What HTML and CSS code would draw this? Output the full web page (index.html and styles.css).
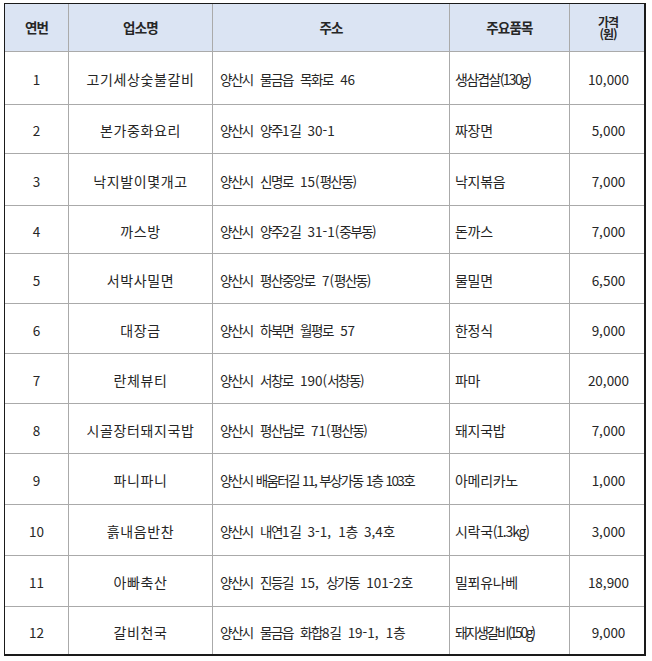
FILE: index.html
```html
<!DOCTYPE html>
<html lang="ko">
<head>
<meta charset="utf-8">
<title>착한가격업소</title>
<link rel="stylesheet" href="styles.css">
</head>
<body>
<div class="sheet">
  <div class="cell head">연번</div>
  <div class="cell head">업소명</div>
  <div class="cell head">주소</div>
  <div class="cell head">주요품목</div>
  <div class="cell head last two"><span>가격</span><span>(원)</span></div>

  <div class="cell num">1</div>
  <div class="cell name">고기세상숯불갈비</div>
  <div class="cell addr"><span>양산시 물금읍 목화로 <span class="d">46</span></span></div>
  <div class="cell item tight">생삼겹살(130g)</div>
  <div class="cell price last">10,000</div>

  <div class="cell num">2</div>
  <div class="cell name">본가중화요리</div>
  <div class="cell addr"><span>양산시 양주<span class="d">1</span>길 <span class="d">30-1</span></span></div>
  <div class="cell item">짜장면</div>
  <div class="cell price last">5,000</div>

  <div class="cell num">3</div>
  <div class="cell name">낙지발이몇개고</div>
  <div class="cell addr"><span>양산시 신명로 <span class="d">15(</span>평산동<span class="d">)</span></span></div>
  <div class="cell item">낙지볶음</div>
  <div class="cell price last">7,000</div>

  <div class="cell num">4</div>
  <div class="cell name">까스방</div>
  <div class="cell addr"><span>양산시 양주<span class="d">2</span>길 <span class="d">31-1(</span>중부동<span class="d">)</span></span></div>
  <div class="cell item">돈까스</div>
  <div class="cell price last">7,000</div>

  <div class="cell num">5</div>
  <div class="cell name">서박사밀면</div>
  <div class="cell addr"><span>양산시 평산중앙로 <span class="d">7(</span>평산동<span class="d">)</span></span></div>
  <div class="cell item">물밀면</div>
  <div class="cell price last">6,500</div>

  <div class="cell num">6</div>
  <div class="cell name">대장금</div>
  <div class="cell addr"><span>양산시 하북면 월평로 <span class="d">57</span></span></div>
  <div class="cell item">한정식</div>
  <div class="cell price last">9,000</div>

  <div class="cell num">7</div>
  <div class="cell name">란체뷰티</div>
  <div class="cell addr"><span>양산시 서창로 <span class="d">190(</span>서창동<span class="d">)</span></span></div>
  <div class="cell item">파마</div>
  <div class="cell price last">20,000</div>

  <div class="cell num">8</div>
  <div class="cell name">시골장터돼지국밥</div>
  <div class="cell addr"><span>양산시 평산남로 <span class="d">71(</span>평산동<span class="d">)</span></span></div>
  <div class="cell item">돼지국밥</div>
  <div class="cell price last">7,000</div>

  <div class="cell num">9</div>
  <div class="cell name">파니파니</div>
  <div class="cell addr small"><span>양산시 배움터길 11, 부상가동 1층 103호</span></div>
  <div class="cell item">아메리카노</div>
  <div class="cell price last">1,000</div>

  <div class="cell num">10</div>
  <div class="cell name">흙내음반찬</div>
  <div class="cell addr"><span>양산시 내연<span class="d">1</span>길 <span class="d">3-1,</span> <span class="d">1</span>층 <span class="d">3,4</span>호</span></div>
  <div class="cell item"><span>시락국<span class="sub">(1.3kg)</span></span></div>
  <div class="cell price last">3,000</div>

  <div class="cell num">11</div>
  <div class="cell name">아빠축산</div>
  <div class="cell addr"><span>양산시 진등길 <span class="d">15,</span> 상가동 <span class="d">101-2</span>호</span></div>
  <div class="cell item">밀푀유나베</div>
  <div class="cell price last">18,900</div>

  <div class="cell num bottom">12</div>
  <div class="cell name bottom">갈비천국</div>
  <div class="cell addr bottom"><span>양산시 물금읍 화합<span class="d">8</span>길 <span class="d">19-1,</span> <span class="d">1</span>층</span></div>
  <div class="cell item tighter bottom">돼지생갈비(150g)</div>
  <div class="cell price last bottom">9,000</div>
</div>
</body>
</html>
```

FILE: styles.css
```css
html, body {
  margin: 0;
  padding: 0;
  background: #ffffff;
}

body {
  font-family: "Noto Sans CJK KR", "Noto Sans", sans-serif;
  color: #262626;
  font-size: 14px;
}

.sheet {
  margin: 3px 0 0 4px;
  width: 639px;
  display: grid;
  grid-template-columns: 64px 144px 237px 120px 74px;
  grid-template-rows: 48px 53px 49px 52px 48px 50px 50px 50px 50px 51px 51px 51px 47px;
  border-top: 1px solid #1a1a1a;
  border-left: 1px solid #1a1a1a;
  border-right: 2px solid #1a1a1a;
  border-bottom: 2px solid #1a1a1a;
}

.cell {
  display: flex;
  align-items: center;
  border-right: 1px solid #aaaaaa;
  border-bottom: 1px solid #aaaaaa;
  line-height: 1.2;
  white-space: nowrap;
  overflow: hidden;
}

.cell.last {
  border-right: none;
}

.cell.bottom {
  border-bottom: none;
}

.head {
  background: #dbe4f3;
  justify-content: center;
  font-weight: 700;
  font-size: 13.5px;
  letter-spacing: -0.8px;
  color: #262626;
}

.head.two {
  flex-direction: column;
  justify-content: center;
  font-size: 12px;
  line-height: 12px;
  letter-spacing: -1px;
  padding-left: 2px;
}

.num {
  justify-content: center;
  font-size: 13.5px;
  padding-top: 3px;
}

.name {
  justify-content: center;
  letter-spacing: 0.6px;
  padding-top: 3px;
}

.addr {
  padding-left: 7px;
  font-size: 13.5px;
  letter-spacing: -1.5px;
  word-spacing: 5px;
  padding-top: 3px;
}

.addr .d {
  letter-spacing: 0;
}

.addr.small {
  letter-spacing: -1.6px;
  word-spacing: 1px;
}

.item {
  padding-left: 5px;
  padding-top: 3px;
  letter-spacing: -0.3px;
}

.item.tight {
  letter-spacing: -1.7px;
}

.item .sub {
  letter-spacing: -1.2px;
}

.item.tighter {
  letter-spacing: -2.4px;
}

.price {
  justify-content: center;
  font-size: 13.5px;
  padding-top: 3px;
  padding-left: 3px;
}
```
